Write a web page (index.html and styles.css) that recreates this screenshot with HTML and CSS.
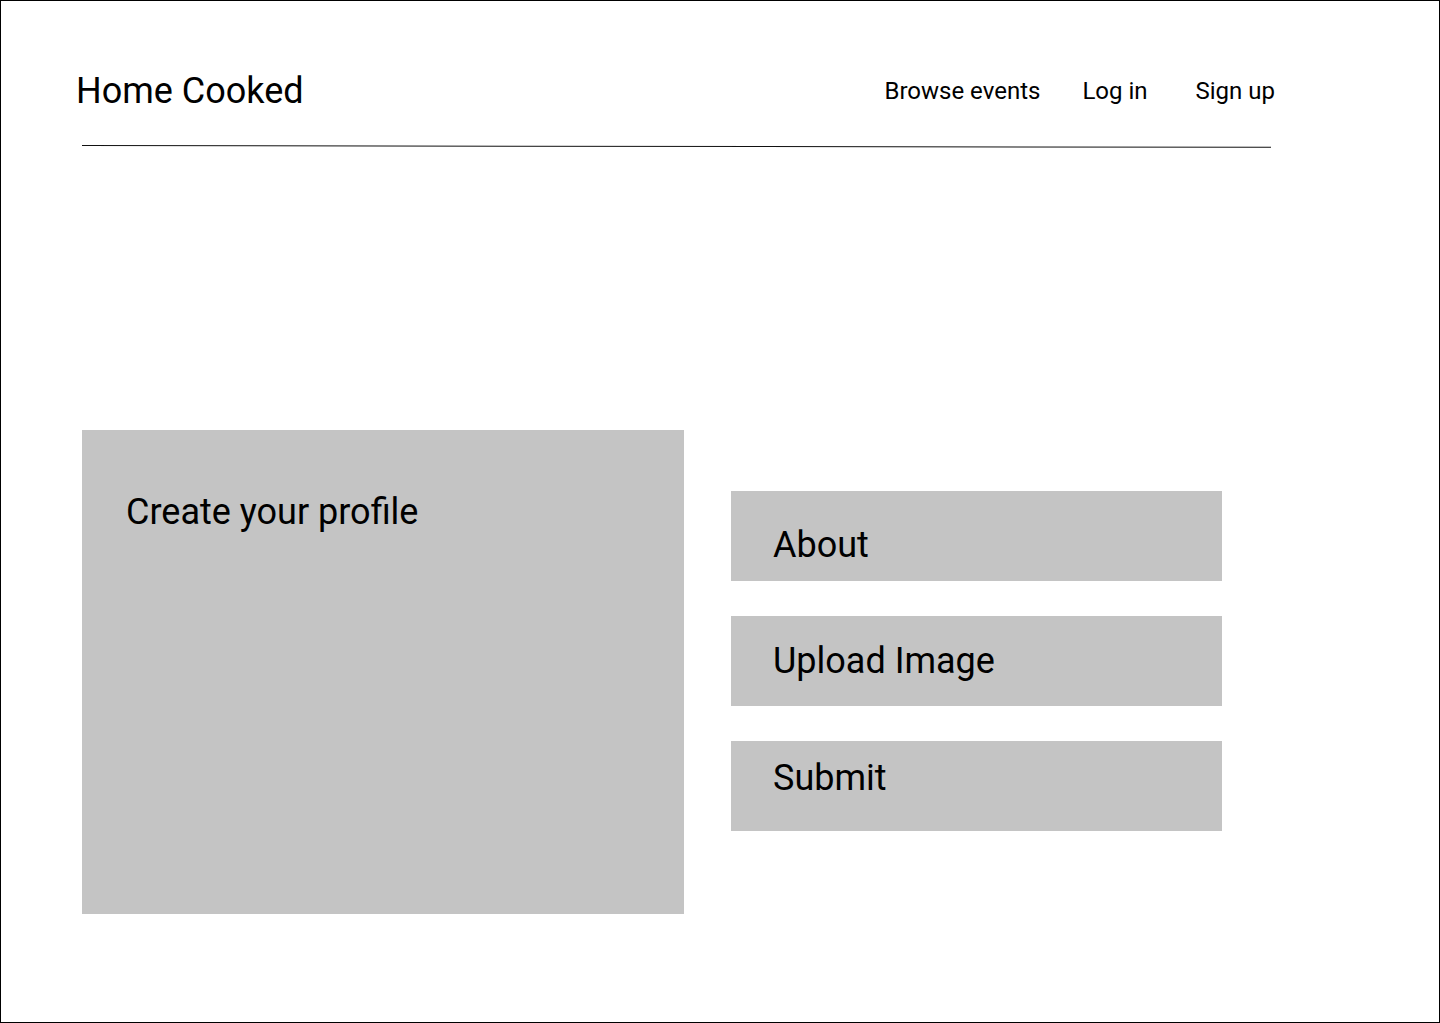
FILE: index.html
```html
<!DOCTYPE html>
<html lang="en">
<head>
<meta charset="utf-8">
<title>Home Cooked</title>
<link rel="stylesheet" href="styles.css">
</head>
<body>
<div class="frame">
  <header class="header">
    <div class="brand">Home Cooked</div>
    <nav class="nav">
      <a class="nav-link nav-browse" href="#">Browse events</a>
      <a class="nav-link nav-login" href="#">Log in</a>
      <a class="nav-link nav-signup" href="#">Sign up</a>
    </nav>
  </header>
  <div class="rule"></div>
  <main class="main">
    <section class="profile-card">
      <h1 class="profile-title">Create your profile</h1>
    </section>
    <div class="actions">
      <div class="action action-about">About</div>
      <div class="action action-upload">Upload Image</div>
      <div class="action action-submit">Submit</div>
    </div>
  </main>
</div>
</body>
</html>
```

FILE: styles.css
```css
* { box-sizing: border-box; }
html, body { margin: 0; padding: 0; background: #fff; }
body { font-family: Roboto, "Noto Sans", sans-serif; color: #000; }

.frame {
  width: 1440px;
  height: 1023px;
  border: 1px solid #000;
  overflow: hidden;
}

.header {
  display: flex;
  align-items: flex-start;
  justify-content: space-between;
  margin-top: 69px;
  padding-left: 75px;
  padding-right: 164px;
}

.brand {
  font-size: 36px;
  line-height: 42px;
  font-weight: 400;
}

.nav {
  display: flex;
  margin-top: 7px;
}

.nav-link {
  font-size: 24px;
  line-height: 28px;
  color: #000;
  text-decoration: none;
}
.nav-login { margin-left: 42px; }
.nav-signup { margin-left: 48px; }

.rule {
  margin-top: 33px;
  margin-left: 81px;
  width: 1189px;
  height: 1px;
  background: #111;
  transform: rotate(0.09deg);
  transform-origin: left center;
}

.main {
  display: flex;
  align-items: flex-start;
  margin-top: 284px;
  padding-left: 81px;
}

.profile-card {
  width: 602px;
  height: 484px;
  background: #c4c4c4;
  padding: 61px 0 0 44px;
}

.profile-title {
  margin: 0;
  font-size: 36px;
  line-height: 42px;
  font-weight: 400;
}

.actions {
  display: flex;
  flex-direction: column;
  gap: 35px;
  margin-left: 47px;
  margin-top: 61px;
}

.action {
  width: 491px;
  height: 90px;
  background: #c4c4c4;
  padding-left: 42px;
  font-size: 36px;
  line-height: 42px;
}
.action-about { padding-top: 33px; }
.action-upload { padding-top: 24px; }
.action-submit { padding-top: 16px; }
```
